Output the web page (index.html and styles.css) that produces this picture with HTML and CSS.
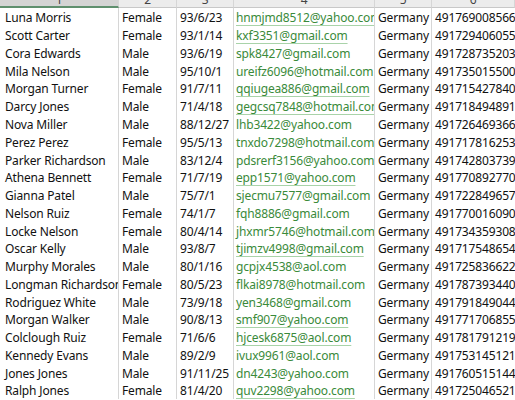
FILE: index.html
```html
<!DOCTYPE html>
<html>
<head>
<meta charset="utf-8">
<link rel="stylesheet" href="styles.css">
</head>
<body>
<div class="sheet">
  <div class="hd hd-sel"><span>1</span></div>
  <div class="hd"><span>2</span></div>
  <div class="hd"><span>3</span></div>
  <div class="hd"><span>4</span></div>
  <div class="hd"><span>5</span></div>
  <div class="hd"><span>6</span></div>

  <div class="c name">Luna Morris</div><div class="c">Female</div><div class="c">93/6/23</div><div class="c mail"><span>hnmjmd8512@yahoo.com</span></div><div class="c">Germany</div><div class="c">491769008566</div>
  <div class="c name">Scott Carter</div><div class="c">Female</div><div class="c">93/1/14</div><div class="c mail"><span>kxf3351@gmail.com</span></div><div class="c">Germany</div><div class="c">491729406055</div>
  <div class="c name">Cora Edwards</div><div class="c">Male</div><div class="c">93/6/19</div><div class="c mail"><span>spk8427@gmail.com</span></div><div class="c">Germany</div><div class="c">491728735203</div>
  <div class="c name">Mila Nelson</div><div class="c">Male</div><div class="c">95/10/1</div><div class="c mail"><span>ureifz6096@hotmail.com</span></div><div class="c">Germany</div><div class="c">491735015500</div>
  <div class="c name">Morgan Turner</div><div class="c">Female</div><div class="c">91/7/11</div><div class="c mail"><span>qqiugea886@gmail.com</span></div><div class="c">Germany</div><div class="c">491715427840</div>
  <div class="c name">Darcy Jones</div><div class="c">Male</div><div class="c">71/4/18</div><div class="c mail"><span>gegcsq7848@hotmail.com</span></div><div class="c">Germany</div><div class="c">491718494891</div>
  <div class="c name">Nova Miller</div><div class="c">Male</div><div class="c">88/12/27</div><div class="c mail"><span>lhb3422@yahoo.com</span></div><div class="c">Germany</div><div class="c">491726469366</div>
  <div class="c name">Perez Perez</div><div class="c">Female</div><div class="c">95/5/13</div><div class="c mail"><span>tnxdo7298@hotmail.com</span></div><div class="c">Germany</div><div class="c">491717816253</div>
  <div class="c name">Parker Richardson</div><div class="c">Male</div><div class="c">83/12/4</div><div class="c mail"><span>pdsrerf3156@yahoo.com</span></div><div class="c">Germany</div><div class="c">491742803739</div>
  <div class="c name">Athena Bennett</div><div class="c">Female</div><div class="c">71/7/19</div><div class="c mail"><span>epp1571@yahoo.com</span></div><div class="c">Germany</div><div class="c">491770892770</div>
  <div class="c name">Gianna Patel</div><div class="c">Male</div><div class="c">75/7/1</div><div class="c mail"><span>sjecmu7577@gmail.com</span></div><div class="c">Germany</div><div class="c">491722849657</div>
  <div class="c name">Nelson Ruiz</div><div class="c">Female</div><div class="c">74/1/7</div><div class="c mail"><span>fqh8886@gmail.com</span></div><div class="c">Germany</div><div class="c">491770016090</div>
  <div class="c name">Locke Nelson</div><div class="c">Female</div><div class="c">80/4/14</div><div class="c mail"><span>jhxmr5746@hotmail.com</span></div><div class="c">Germany</div><div class="c">491734359308</div>
  <div class="c name">Oscar Kelly</div><div class="c">Male</div><div class="c">93/8/7</div><div class="c mail"><span>tjimzv4998@gmail.com</span></div><div class="c">Germany</div><div class="c">491717548654</div>
  <div class="c name">Murphy Morales</div><div class="c">Male</div><div class="c">80/1/16</div><div class="c mail"><span>gcpjx4538@aol.com</span></div><div class="c">Germany</div><div class="c">491725836622</div>
  <div class="c name">Longman Richardson</div><div class="c">Female</div><div class="c">80/5/23</div><div class="c mail"><span>flkai8978@hotmail.com</span></div><div class="c">Germany</div><div class="c">491787393440</div>
  <div class="c name">Rodriguez White</div><div class="c">Male</div><div class="c">73/9/18</div><div class="c mail"><span>yen3468@gmail.com</span></div><div class="c">Germany</div><div class="c">491791849044</div>
  <div class="c name">Morgan Walker</div><div class="c">Male</div><div class="c">90/8/13</div><div class="c mail"><span>smf907@yahoo.com</span></div><div class="c">Germany</div><div class="c">491771706855</div>
  <div class="c name">Colclough Ruiz</div><div class="c">Female</div><div class="c">71/6/6</div><div class="c mail"><span>hjcesk6875@aol.com</span></div><div class="c">Germany</div><div class="c">491781791219</div>
  <div class="c name">Kennedy Evans</div><div class="c">Male</div><div class="c">89/2/9</div><div class="c mail"><span>ivux9961@aol.com</span></div><div class="c">Germany</div><div class="c">491753145121</div>
  <div class="c name">Jones Jones</div><div class="c">Male</div><div class="c">91/11/25</div><div class="c mail"><span>dn4243@yahoo.com</span></div><div class="c">Germany</div><div class="c">491760515144</div>
  <div class="c name">Ralph Jones</div><div class="c">Female</div><div class="c">81/4/20</div><div class="c mail"><span>quv2298@yahoo.com</span></div><div class="c">Germany</div><div class="c">491725046521</div>
</div>
</body>
</html>
```
FILE: styles.css
```css
html, body {
  margin: 0;
  padding: 0;
  background: #ffffff;
}
.sheet {
  display: grid;
  grid-template-columns: 119px 58px 57px 141px 57px 1fr;
  grid-template-rows: 8px;
  grid-auto-rows: 17.78px;
  font-family: "Noto Sans", sans-serif;
  font-size: 12px;
  letter-spacing: -0.15px;
  color: #111111;
  width: 515px;
  height: 400px;
  overflow: hidden;
}
.hd {
  box-sizing: border-box;
  height: 8px;
  background: #ececec;
  border-bottom: 1px solid #c8c8c8;
  border-right: 1px solid #d6d6d6;
  overflow: hidden;
  text-align: center;
  color: #444;
}
.hd span {
  display: block;
  line-height: 12px;
  margin-top: -6.5px;
}
.hd-sel {
  background: #d4d4d4;
  border-bottom: 2px solid #5f8f6e;
}
.c {
  box-sizing: border-box;
  border-right: 1px solid #d6d6d6;
  padding: 2.4px 0 0 3px;
  line-height: 15px;
  white-space: nowrap;
  overflow: hidden;
}
.sheet > .c:nth-child(6n) {
  border-right: none;
}
.name {
  padding-left: 5px;
}
.mail {
  color: #3a8a3a;
  padding-left: 2px;
}
.mail span {
  text-decoration: underline;
  text-decoration-color: #a9d3a9;
  text-underline-offset: 3px;
  text-decoration-thickness: 1px;
}
```
